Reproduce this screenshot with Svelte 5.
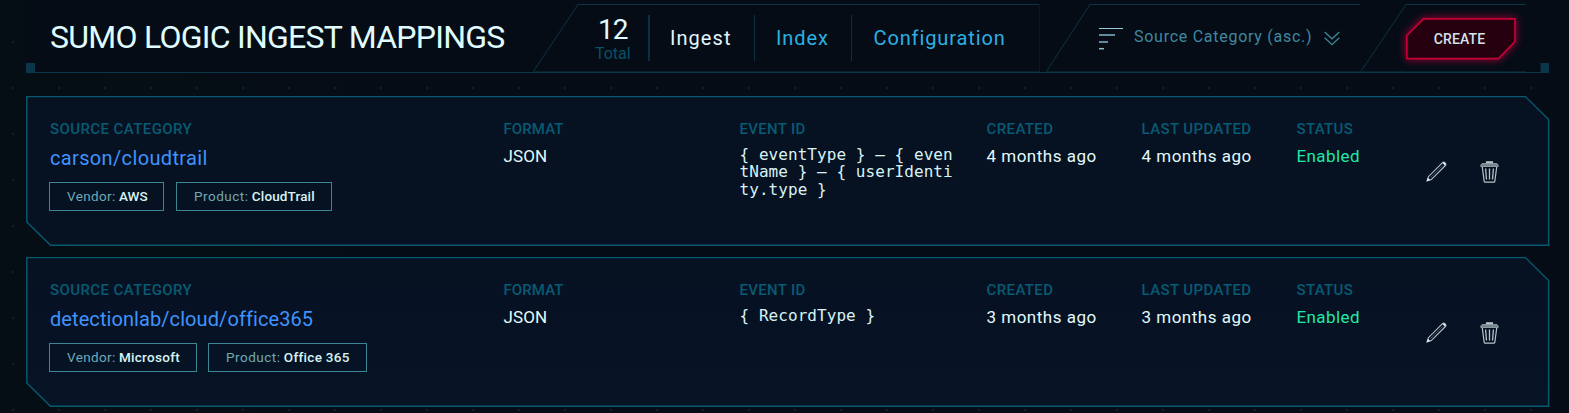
<script>
  const tabs = [
    { name: 'Ingest', width: 106, ls: 1.05, active: true },
    { name: 'Index', width: 97.5, ls: 0.92 },
    { name: 'Configuration', width: 180, ls: 0.88 }
  ];

  const mappings = [
    {
      source: 'carson/cloudtrail', sourceLs: 0.35, age: '4 months ago',
      event: '{ eventType } – { eventName } – { userIdentity.type }',
      tags: [
        { key: 'Vendor:', value: 'AWS', width: 115, kls: 0.35, vls: 0.1 },
        { key: 'Product:', value: 'CloudTrail', width: 156, kls: 0.5, vls: 0.15 }
      ]
    },
    {
      source: 'detectionlab/cloud/office365', sourceLs: 0.08, age: '3 months ago',
      event: '{ RecordType }',
      tags: [
        { key: 'Vendor:', value: 'Microsoft', width: 148, kls: 0.35, vls: 0.3 },
        { key: 'Product:', value: 'Office 365', width: 159, kls: 0.5, vls: 0.3 }
      ]
    }
  ];
</script>

<div class="page">
  <header>
    <svg class="frame" width="1523" height="73" viewBox="0 0 1523 73" fill="none">
      <path d="M0 0H1523V73H0Z" fill="#050c15" />
      <path d="M0 72.5H1523" stroke="#0b3549" />
      <path d="M552 4.5H1013.5M1064 4.5H1334M1380 4.5H1500" stroke="#0b3344" />
      <path d="M507 72L552 4.5M1020 72L1064 4.5M1334.500 72L1380 4.500" stroke="#0a2c3b" stroke-width="1.200" />
      <path d="M1013.500 5V72" stroke="#081721" />
      <path d="M507 71.500H1014M1020 71.500H1500" stroke="#08202c" />
      <path d="M0 63H9V73H0ZM1514.500 63H1523V73H1514.500Z" fill="#0b364a" />
    </svg>

    <h1>SUMO LOGIC INGEST MAPPINGS</h1>

    <nav>
      <div class="total"><strong>12</strong><span>Total</span></div>
      {#each tabs as tab}
        <a class:active={tab.active} style:width="{tab.width}px" style:letter-spacing="{tab.ls}px">{tab.name}</a>
      {/each}
    </nav>

    <div class="sort">
      <svg width="24" height="23" viewBox="0 0 24 23" fill="none">
        <path d="M0 1.500H24" stroke="#9acbe0" />
        <path d="M0 8H16" stroke="#5b8b9c" stroke-width="2" />
        <path d="M0 15H9" stroke="#5b8b9c" stroke-width="2" />
        <path d="M0 21.700H5" stroke="#8fbacb" stroke-width="1.500" />
      </svg>
      <span>Source Category (asc.)</span>
      <svg width="16" height="16" viewBox="0 0 16 16" fill="none" stroke="#3d8598" stroke-width="1.300">
        <path d="M.7 1L8 7.800L15.300 1M.7 6.700L8 13.700L15.300 6.700" />
      </svg>
    </div>

    <button>
      <svg width="110" height="42" viewBox="0 0 110 42">
        <path d="M.8 17.500L17.500 .8H109V23.500L92.500 40.700H.8Z" fill="#26000e" stroke="#c30137" stroke-width="1.700" />
      </svg>
      <span>CREATE</span>
    </button>
  </header>

  <main>
    {#each mappings as m, i}
      <article class:lit={i === 1}>
        <svg class="frame" width="1523.300" height="150" viewBox="0 0 1523.300 150">
          <defs>
            <linearGradient id="fill{i}" x1="0" y1="0" x2="0" y2="1">
              <stop offset="0" stop-color="#061122" />
              <stop offset="1" stop-color={i === 1 ? '#061426' : '#061122'} />
            </linearGradient>
          </defs>
          <path d="M.8 .6H1499.500L1522.600 23.500V149.300H24.500L.8 126Z" fill="url(#fill{i})" stroke="#075a70" stroke-width="1.400" />
        </svg>
        <section>
          <h2 style:letter-spacing="0.42px">SOURCE CATEGORY</h2>
          <a class="source" style:letter-spacing="{m.sourceLs}px">{m.source}</a>
          <div class="tags">
            {#each m.tags as t}
              <div class="tag" style:width="{t.width}px">
                <span style:letter-spacing="{t.kls}px">{t.key}</span>
                <b style:letter-spacing="{t.vls}px">{t.value}</b>
              </div>
            {/each}
          </div>
        </section>
        <section><h2 style:letter-spacing="0.1px">FORMAT</h2><p style:letter-spacing="0.1px">JSON</p></section>
        <section><h2 style:letter-spacing="0.3px">EVENT ID</h2><code>{m.event}</code></section>
        <section><h2 style:letter-spacing="0.4px">CREATED</h2><p>{m.age}</p></section>
        <section><h2 style:letter-spacing="0.4px">LAST UPDATED</h2><p>{m.age}</p></section>
        <section><h2 style:letter-spacing="0.35px">STATUS</h2><p class="enabled">Enabled</p></section>
        <div class="actions">
          <svg width="21" height="21" viewBox="0 0 21 21" fill="none" stroke="#b5c4ca" stroke-width="1.100">
            <path d="M1 20L2.400 15.700L16.500 1.600Q17.500 .7 18.600 1.500L19.500 2.400Q20.400 3.500 19.400 4.500L5.300 18.600Z" />
            <path d="M4.300 16.700L16.600 4.400" stroke-width=".6" stroke="#61717c" />
            <path d="M16.500 2L18 1.200L19.900 3.100L18.800 4.600ZM.8 20.200L2 16.800L4.200 19Z" fill="#e0f2f5" stroke="none" />
          </svg>
          <svg width="19" height="22" viewBox="0 0 19 22" fill="none" stroke="#b5c5ca" stroke-width="1.200">
            <path d="M6.500 2.200V.8H12.500V2.200Z" fill="#9aa9b1" />
            <path d="M.8 5.500V4L2 2.600H17L18.200 4V5.500Z" fill="#74858f" stroke="#91a2aa" stroke-width=".9" />
            <path d="M2.300 6L4.200 20.500Q4.300 21.200 5 21.200H14Q14.700 21.200 14.800 20.500L16.700 6" />
            <path d="M5.600 7.500L6.500 18.500M9.500 7.500V18.500M13.400 7.500L12.500 18.500" stroke-width="1.300" />
          </svg>
        </div>
      </article>
    {/each}
  </main>
</div>

<style>
  :global(body) { background: #050c15; overflow: hidden; }
  .page {
    box-sizing: border-box;
    height: 413px;
    padding: 0 20px 0 26px;
    overflow: hidden;
    font-family: Roboto, sans-serif;
    color: #d9f3f5;
    background:
      radial-gradient(circle at 13px 1px, #13202b 1px, transparent 1.500px) 0 -5px / 46px 46px,
      linear-gradient(90deg, #050e15, #060c16 30%, #060c16);
  }
  .frame { position: absolute; left: 0; top: 0; z-index: -1; overflow: visible; }
  header, article { position: relative; isolation: isolate; }
  header { display: flex; height: 73px; }
  h1 {
    flex: none;
    box-sizing: border-box;
    width: 564px;
    margin: 0;
    padding-left: 24px;
    font-size: 32px;
    line-height: 74px;
    font-weight: 400;
    letter-spacing: -0.740px;
    white-space: nowrap;
    color: #e0fcff;
  }
  nav { flex: none; display: flex; width: 485.500px; height: 47px; padding-top: 15px; }
  .total { flex: none; width: 57.500px; margin-top: -2px; text-align: center; }
  .total strong { display: block; padding-right: 12px; font-size: 28px; font-weight: 400; line-height: 34px; letter-spacing: -1px; color: #e0fcff; }
  .total span { display: block; padding-right: 12px; font-size: 16px; line-height: 13px; color: #075168; }
  nav a {
    flex: none;
    box-sizing: border-box;
    height: 46px;
    padding-left: 21.500px;
    border-left: 1px solid #0a3143;
    font-size: 20px;
    line-height: 46px;
    color: #2cb0e4;
  }
  nav a.active { color: #e2f6fc; border-left-width: 2px; padding-left: 20.500px; }
  .sort { flex: none; box-sizing: border-box; display: flex; width: 303.500px; padding-left: 23px; }
  .sort svg { flex: none; margin-top: 27px; }
  .sort span { margin-left: 11.500px; width: 178.500px; font-size: 16px; line-height: 73px; letter-spacing: 0.730px; white-space: nowrap; color: #4088a0; }
  .sort span + svg { margin: 31px 0 0 11px; }
  button { position: relative; flex: none; width: 110px; height: 42px; margin: 17.500px 0 0 26.500px; padding: 0; border: 0; background: none; font: 500 14px Roboto, sans-serif; letter-spacing: 0.100px; color: #d5e3ea; text-align: center; }
  button svg { position: absolute; left: 0; top: 0; overflow: visible; filter: drop-shadow(0 0 4px #a9003a); }
  button span { position: relative; left: -1px; }
  main { display: flex; flex-direction: column; gap: 12px; padding-top: 23px; }
  article {
    box-sizing: border-box;
    flex: none;
    display: grid;
    grid-template-columns: 453.500px 236px 247px 155px 155px 129px auto;
    width: 1523.300px;
    height: 149.300px;
    padding: 23px 0 0 24px;
  }
  h2 { margin: 0; font-size: 15px; line-height: 20px; font-weight: 500; color: #075b73; white-space: nowrap; }
  p { margin: 4.500px 0 0; font-size: 17px; line-height: 24px; letter-spacing: 0.500px; color: #e2fafb; }
  .enabled { color: #22e8a6; letter-spacing: 0.400px; }
  .source { display: block; margin-top: 6.500px; font-size: 20px; line-height: 24px; color: #4093fc; }
  code { display: block; width: 215px; margin-top: 6.500px; font: 16px/17.600px "DejaVu Sans Mono", monospace; letter-spacing: 0.060px; word-break: break-all; }
  .tags { display: flex; gap: 12px; margin-top: 12.500px; margin-left: -1px; }
  .lit .tags { gap: 11px; }
  .tag { box-sizing: border-box; height: 29px; border: 1px solid #3b8595; padding-left: 17px; font-size: 13.500px; line-height: 26px; white-space: nowrap; color: #6fa9b5; }
  .tag b { font-weight: 500; color: #d9f3f5; }
  .actions { display: flex; gap: 33px; padding-top: 41.500px; }
</style>
